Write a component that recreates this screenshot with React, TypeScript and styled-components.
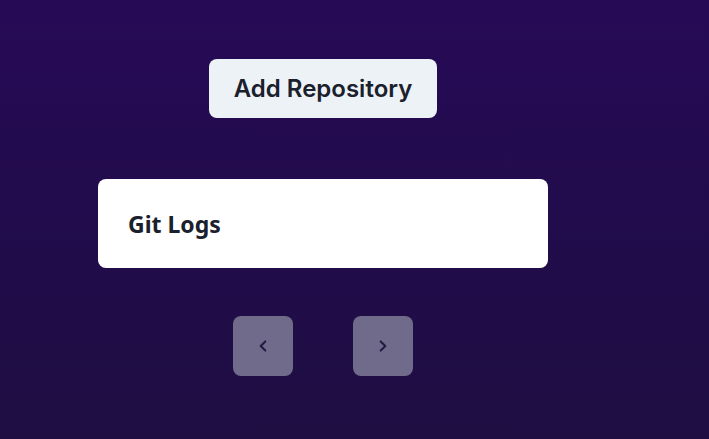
import React from "react";
import styled, { createGlobalStyle } from "styled-components";

const Global = createGlobalStyle`
  html, body { margin: 0; padding: 0; height: 100%; }
  body {
    background: linear-gradient(180deg, #260a56 0%, #1e0e42 100%);
    min-height: 439px;
    font-family: Inter, "Noto Sans", sans-serif;
  }
`;

const Page = styled.div`
  width: 646px;
  height: 439px;
  display: flex;
  flex-direction: column;
  align-items: center;
  padding-top: 59px;
  box-sizing: border-box;
`;

const AddButton = styled.button`
  height: 59px;
  padding: 0 25px;
  border: none;
  border-radius: 8px;
  background: #edf2f7;
  color: #1a202c;
  font-family: Inter, sans-serif;
  font-weight: 600;
  font-size: 24px;
  cursor: pointer;
`;

const Card = styled.div`
  margin-top: 61px;
  width: 450px;
  height: 89px;
  box-sizing: border-box;
  background: #ffffff;
  border-radius: 8px;
  padding: 0 30px;
  display: flex;
  align-items: center;
`;

const Title = styled.h2`
  margin: 0;
  font-family: "Noto Sans", sans-serif;
  font-weight: 700;
  font-size: 23px;
  color: #1a202c;
`;

const Pager = styled.div`
  margin-top: 48px;
  display: flex;
  gap: 60px;
`;

const NavButton = styled.button`
  width: 60px;
  height: 60px;
  border: none;
  border-radius: 8px;
  background: #706a8b;
  color: #231a44;
  display: flex;
  align-items: center;
  justify-content: center;
  padding: 0;
`;

const Chevron = ({ dir }: { dir: "left" | "right" }) => (
  <svg width="22" height="22" viewBox="0 0 24 24" fill="none" stroke="currentColor" strokeWidth="2.2" strokeLinecap="round" strokeLinejoin="round">
    {dir === "left" ? <path d="M14.5 17l-5-5 5-5" /> : <path d="M9.5 17l5-5-5-5" />}
  </svg>
);

export default function App() {
  return (
    <>
      <Global />
      <Page>
        <AddButton>Add Repository</AddButton>
        <Card>
          <Title>Git Logs</Title>
        </Card>
        <Pager>
          <NavButton aria-label="previous"><Chevron dir="left" /></NavButton>
          <NavButton aria-label="next"><Chevron dir="right" /></NavButton>
        </Pager>
      </Page>
    </>
  );
}
